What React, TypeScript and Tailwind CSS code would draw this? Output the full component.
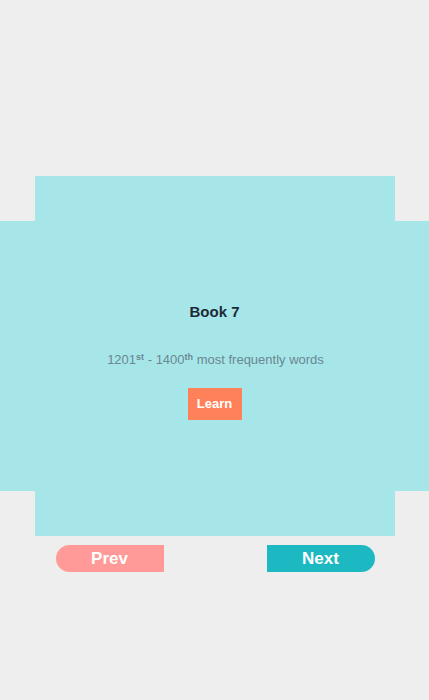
import React from 'react';

const App: React.FC = () => {
  return (
    <div className="min-h-[700px] bg-[#eeeeee] pt-[176px] font-['Liberation_Sans',Arial,sans-serif]">
      {/* Card */}
      <div className="w-[360px] h-[360px] mx-auto bg-[#a6e6e9] flex flex-col justify-center">
        <div className="-mx-[35px] h-[270px] bg-[#a6e6e9] flex flex-col items-center pt-[82px]">
          <h2 className="text-[15px] leading-[18px] font-bold text-[#1e2b36]">Book 7</h2>
          <p className="mt-[31px] pl-[2px] text-[13px] leading-[16px] text-[#6a8792]">
            1201<sup className="font-bold text-[9px]">st</sup> - 1400<sup className="font-bold text-[9px]">th</sup> most frequently words
          </p>
          <button className="mt-[20px] w-[54px] h-[32px] bg-[#ff8159] text-white text-[13px] font-bold">
            Learn
          </button>
        </div>
      </div>

      <div className="w-[360px] mx-auto mt-[9px] flex justify-between pl-[21px] pr-[20px]">
        <button className="w-[108px] h-[27px] bg-[#ff9a98] text-white text-[17px] font-bold rounded-l-full">
          Prev
        </button>
        <button className="w-[108px] h-[27px] bg-[#1db9c3] text-white text-[17px] font-bold rounded-r-full">
          Next
        </button>
      </div>
    </div>
  );
};

export default App;
